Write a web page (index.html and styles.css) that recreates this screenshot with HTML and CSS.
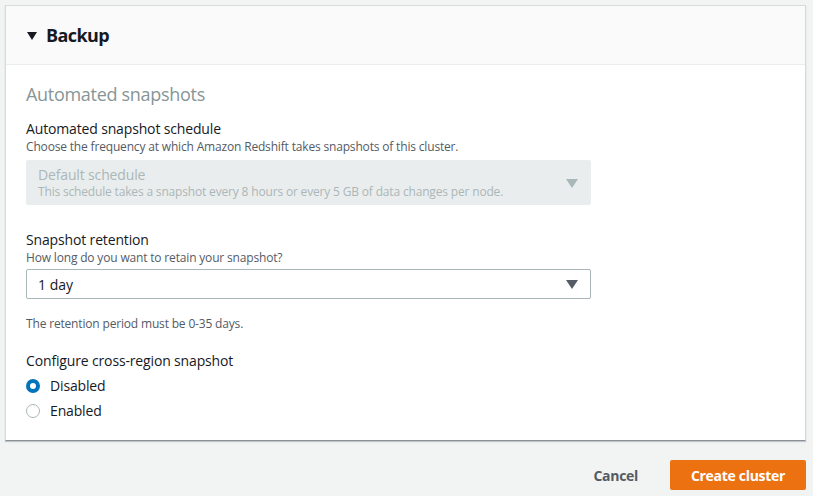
FILE: index.html
```html
<!DOCTYPE html>
<html>
<head>
<meta charset="utf-8">
<link rel="stylesheet" href="styles.css">
</head>
<body>
<div class="page">
  <section class="panel">
    <header class="panel-header">
      <span class="caret"></span>
      <h2>Backup</h2>
    </header>
    <div class="panel-body">
      <h3 class="section-title">Automated snapshots</h3>

      <div class="field">
        <div class="label">Automated snapshot schedule</div>
        <div class="desc">Choose the frequency at which Amazon Redshift takes snapshots of this cluster.</div>
        <div class="select disabled">
          <div class="select-text">
            <div class="opt-title">Default schedule</div>
            <div class="opt-desc">This schedule takes a snapshot every 8 hours or every 5 GB of data changes per node.</div>
          </div>
          <span class="arrow"></span>
        </div>
      </div>

      <div class="field field-retention">
        <div class="label">Snapshot retention</div>
        <div class="desc">How long do you want to retain your snapshot?</div>
        <div class="select">
          <div class="select-text">1 day</div>
          <span class="arrow"></span>
        </div>
        <div class="hint">The retention period must be 0-35 days.</div>
      </div>

      <div class="field field-radio">
        <div class="label radio-label">Configure cross-region snapshot</div>
        <label class="radio"><span class="dot checked"></span>Disabled</label>
        <label class="radio"><span class="dot"></span>Enabled</label>
      </div>
    </div>
  </section>

  <div class="actions">
    <button class="btn-link">Cancel</button>
    <button class="btn-primary">Create cluster</button>
  </div>
</div>
</body>
</html>
```

FILE: styles.css
```css
* { box-sizing: border-box; }
html, body { margin: 0; padding: 0; }
body {
  background: #f2f3f3;
  font-family: "Open Sans", "Liberation Sans", sans-serif;
  color: #16191f;
  width: 813px;
  height: 496px;
  overflow: hidden;
}
.page {
  padding: 5px 7px 0 5px;
}
.panel {
  background: #fff;
  border: 1px solid #d5dbdb;
  border-bottom: 1px solid #8a8f93;
  box-shadow: 0 1px 1px rgba(0,27,42,0.2);
}
.panel-header {
  height: 59px;
  background: #fafafa;
  border-bottom: 1px solid #eaeded;
  display: flex;
  align-items: center;
  padding-left: 21px;
}
.caret {
  width: 0; height: 0;
  border-left: 5px solid transparent;
  border-right: 5px solid transparent;
  border-top: 8px solid #16191f;
  margin-right: 9px;
  margin-top: 1px;
}
.panel-header h2 {
  margin: 0;
  font-size: 18px;
  font-weight: 700;
  color: #16191f;
  letter-spacing: -0.6px;
}
.panel-body {
  padding: 18px 20px 17px 20px;
}
.section-title {
  margin: 0 0 14px 0;
  font-size: 18px;
  font-weight: 400;
  color: #879596;
  line-height: 22px;
  letter-spacing: -0.3px;
}
.field { width: 565px; }
.label {
  font-size: 14px;
  line-height: 20px;
  color: #16191f;
  letter-spacing: -0.15px;
}
.desc {
  font-size: 12px;
  line-height: 16px;
  color: #545b64;
  margin-bottom: 5px;
  letter-spacing: -0.17px;
}
.field-retention .desc { margin-bottom: 3px; }
.select {
  display: flex;
  align-items: center;
  justify-content: space-between;
  border: 1px solid #aab7b8;
  border-radius: 2px;
  height: 30px;
  padding: 0 12px 0 11px;
  font-size: 14px;
}
.select.disabled {
  background: #eaeded;
  border-color: #eaeded;
  height: 45px;
  color: #aab7b8;
}
.opt-title { font-size: 14px; line-height: 18px; letter-spacing: -0.15px; }
.opt-desc { font-size: 12px; line-height: 15px; letter-spacing: -0.17px; }
.arrow {
  width: 0; height: 0;
  border-left: 6px solid transparent;
  border-right: 6px solid transparent;
  border-top: 9px solid #545b64;
}
.disabled .arrow { border-top-color: #aab7b8; margin-top: 2px; }
.field-retention { margin-top: 25px; }
.hint {
  font-size: 12px;
  line-height: 16px;
  color: #545b64;
  margin-top: 17px;
  letter-spacing: -0.17px;
}
.field-radio { margin-top: 19px; }
.radio-label { margin-bottom: 2px; }
.radio {
  display: flex;
  align-items: center;
  font-size: 14px;
  line-height: 20px;
  height: 25px;
  letter-spacing: -0.15px;
}
.dot {
  width: 14px; height: 14px;
  border-radius: 50%;
  border: 1px solid #aab7b8;
  margin-right: 10px;
  background: #fff;
}
.dot.checked {
  border: 4px solid #0073bb;
}
.actions {
  display: flex;
  justify-content: flex-end;
  align-items: center;
  margin-top: 19px;
  gap: 32px;
}
.btn-link {
  background: none;
  border: none;
  font-family: inherit;
  font-size: 14px;
  font-weight: 700;
  color: #545b64;
  padding: 0;
  letter-spacing: -0.3px;
}
.btn-primary {
  background: #ec7211;
  border: none;
  border-radius: 2px;
  color: #fff;
  font-family: inherit;
  font-size: 14px;
  font-weight: 700;
  width: 136px;
  height: 30px;
  padding: 0;
  letter-spacing: -0.3px;
}
```
